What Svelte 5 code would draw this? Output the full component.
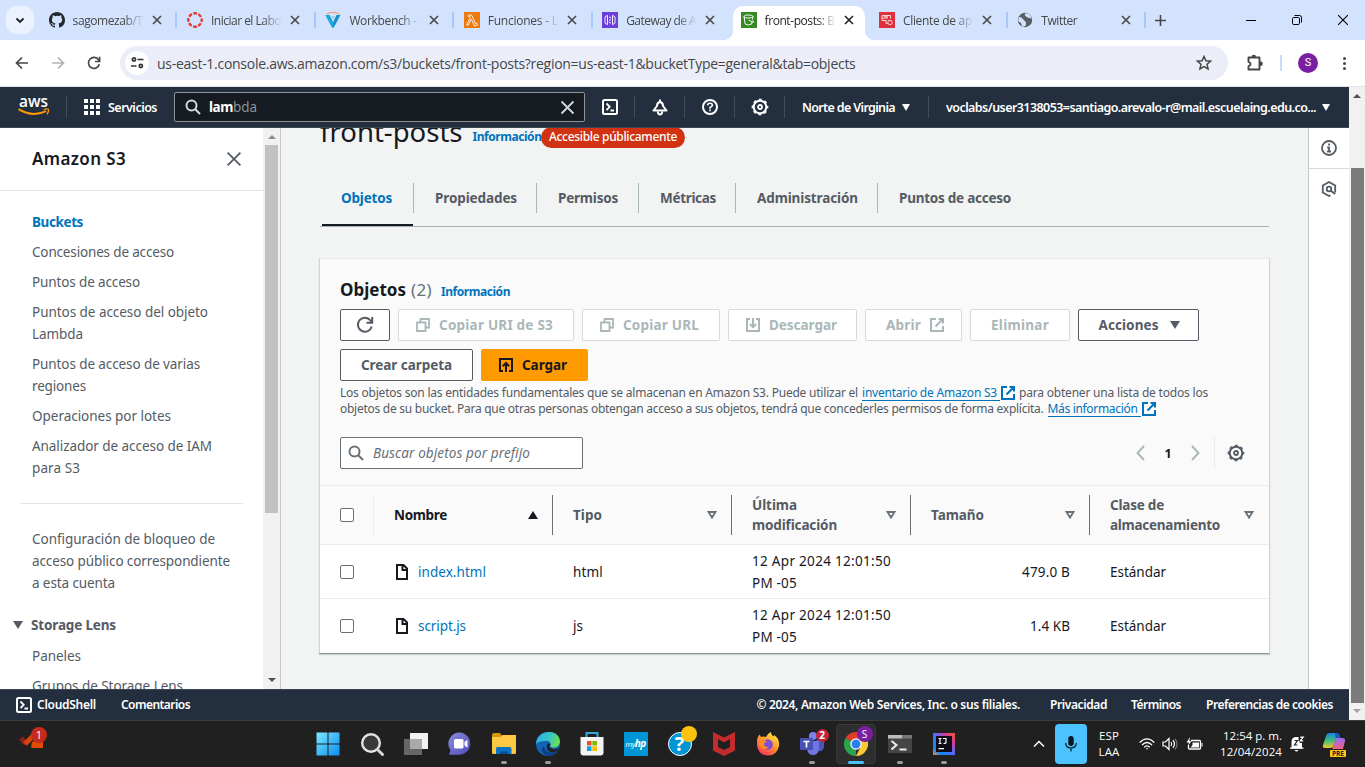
<script>
  // Spreads a label's letters so that it takes exactly the given width.
  function fit(node, width) {
    if (!width) return;
    const natural = node.getBoundingClientRect().width;
    node.style.letterSpacing = (width - natural) / node.textContent.length + 'px';
  }

  const tabs = [
    { icon: 'github', title: 'sagomezab/T', w: 70, sep: true },
    { icon: 'canvas', title: 'Iniciar el Labo', w: 70, sep: true },
    { icon: 'voc', title: 'Workbench - ', w: 70, sep: true },
    { icon: 'lambda', title: 'Funciones - L', w: 70, sep: true },
    { icon: 'gateway', title: 'Gateway de A', w: 70 },
    { icon: 's3', title: 'front-posts: B', w: 70, active: true },
    { icon: 'client', title: 'Cliente de ap', w: 69, sep: true },
    { icon: 'globe', title: 'Twitter', w: 36, sep: true }
  ];

  const links = [
    [['Concesiones de acceso', 142]],
    [['Puntos de acceso', 108]],
    [['Puntos de acceso del objeto', 176], ['Lambda', 51]],
    [['Puntos de acceso de varias', 168], ['regiones', 54]],
    [['Operaciones por lotes', 139]],
    [['Analizador de acceso de IAM', 180], ['para S3', 48]]
  ];

  const pageTabs = [
    { label: 'Objetos', w: 51, box: 94, on: true },
    { label: 'Propiedades', w: 82, box: 123 },
    { label: 'Permisos', w: 60, box: 102 },
    { label: 'Métricas', w: 56, box: 97 },
    { label: 'Administración', w: 101, box: 142 },
    { label: 'Puntos de acceso', w: 112, box: 153 }
  ];

  const columns = [
    { lines: [['Nombre', 53]], sorted: true },
    { lines: [['Tipo', 29]] },
    { lines: [['Última', 45], ['modificación', 85]] },
    { lines: [['Tamaño', 53]] },
    { lines: [['Clase de', 54], ['almacenamiento', 110]] }
  ];

  const rows = [
    { name: 'index.html', nw: 68, type: 'html', tw: 30, size: '479.0 B', sw: 48 },
    { name: 'script.js', nw: 48, type: 'js', tw: 10, size: '1.4 KB', sw: 40 }
  ];
</script>

{#snippet t(text, w, cls = '')}<span class="fit {cls}" use:fit={w}>{text}</span>{/snippet}

{#snippet favicon(kind)}
  {#if kind === 'github'}
    <svg width="16" height="16" viewBox="0 0 16 16"><path fill="#24292f" d="M8 0C3.58 0 0 3.58 0 8c0 3.54 2.29 6.53 5.47 7.59.4.07.55-.17.55-.38 0-.19-.01-.82-.01-1.49-2.01.37-2.53-.49-2.69-.94-.09-.23-.48-.94-.82-1.13-.28-.15-.68-.52-.01-.53.63-.01 1.08.58 1.23.82.72 1.21 1.87.87 2.33.66.07-.52.28-.87.51-1.07-1.78-.2-3.64-.89-3.64-3.95 0-.87.31-1.59.82-2.15-.08-.2-.36-1.02.08-2.12 0 0 .67-.21 2.2.82a7.6 7.6 0 0 1 4 0c1.53-1.04 2.2-.82 2.2-.82.44 1.1.16 1.92.08 2.12.51.56.82 1.27.82 2.15 0 3.07-1.87 3.75-3.65 3.95.29.25.54.73.54 1.48 0 1.07-.01 1.93-.01 2.2 0 .21.15.46.55.38A8.01 8.01 0 0 0 16 8c0-4.42-3.58-8-8-8Z"/></svg>
  {:else if kind === 'canvas'}
    <svg width="16" height="16" viewBox="0 0 16 16"><circle cx="8" cy="8" r="6.700" fill="none" stroke="#e8382b" stroke-width="2.400" stroke-dasharray="3.700 1.562" stroke-dashoffset="1.850"/></svg>
  {:else if kind === 'voc'}
    <svg width="16" height="16" viewBox="0 0 16 16"><path d="M.5 3h4L8 10.500 11.500 3h4L8.800 15.500H7.200z" fill="#1790c9"/><path d="M.5 3h4L8 10.500v5h-.8z" fill="#19a9dc"/><path d="M1.500 2Q8-1 14.500 2" stroke="#f29a76" fill="none" stroke-width="1.200"/><path d="M6 4h4L8 8z" fill="#9fd7ee"/></svg>
  {:else if kind === 'lambda'}
    <svg width="16" height="16" viewBox="0 0 16 16"><rect width="16" height="16" fill="#ee7a0c"/><path d="M4.500 3h3l4 8.500 1.200-.5.8 1.800-3 1.200L7.300 7l-3 6H2.500L6.200 5.800 5.700 4.600H4.500z" fill="none" stroke="#fff" stroke-width=".9"/></svg>
  {:else if kind === 'gateway'}
    <svg width="16" height="16" viewBox="0 0 16 16"><rect width="16" height="16" fill="#6b3ddb"/><path d="M3 5 5.500 3.300v9.400L3 11zM13 5l-2.500-1.700v9.400L13 11zM7 5.300h2M7 10.700h2M7.200 9.500 8.800 6.500" fill="none" stroke="#fff" stroke-width=".9"/></svg>
  {:else if kind === 's3'}
    <svg width="16" height="16" viewBox="0 0 16 16"><rect width="16" height="16" fill="#368a22"/><path d="M3 4.500 4.200 12q3 2 6.400 0l.5-2M11.500 7.500 12 4.500M3 4.500c0-2 9-2 9 0s-9 2-9 0zM7.500 8l4.500 2.300q2-.3-.5-2" fill="none" stroke="#fff"/></svg>
  {:else if kind === 'client'}
    <svg width="16" height="16" viewBox="0 0 16 16"><rect width="16" height="16" fill="#e0303d"/><path d="M3 3.500h8.500v3M3 3.500v5h4.500M3 6h6M7 8.500v3h1.500M5 4.700h4" fill="none" stroke="#fff" stroke-width=".8"/><circle cx="11" cy="10.500" r="2.200" fill="none" stroke="#fff" stroke-width=".8"/></svg>
  {:else}
    <svg width="16" height="16" viewBox="0 0 16 16"><circle cx="8" cy="8" r="7.200" fill="#5a5d61"/><path d="M2 5Q5 5 6 7t2 2 1 4q-2 3-4 1l-1-3-3-2zM8 1.500Q7 3 9 4.500T13 6l1.500 1Q14 2.500 9.500 1.300z" fill="#d3e3fd"/></svg>
  {/if}
{/snippet}

{#snippet cross(size, color, width)}
  <svg width={size} height={size} viewBox="0 0 10 10"><path d="M1 1l8 8M9 1 1 9" stroke={color} stroke-width={width} fill="none"/></svg>
{/snippet}

{#snippet gear(color)}
  <svg width="18" height="18" viewBox="0 0 18 18" fill="none" stroke={color}><circle cx="9" cy="9" r="6.300" stroke-width="2"/><circle cx="9" cy="9" r="7.700" stroke-width="1.300" stroke-dasharray="3 3.048" stroke-dashoffset="1.500"/><circle cx="9" cy="9" r="2" stroke-width="1.800"/></svg>
{/snippet}

{#snippet shell()}
  <svg width="16" height="16" viewBox="0 0 16 16" fill="none" stroke="#fff" stroke-width="2"><rect x="1" y="1" width="14" height="14" rx="1.500"/><path d="m4.500 4.500 3.200 3.300-3.200 3.300M8.500 11.500H12" stroke-width="1.800"/></svg>
{/snippet}

{#snippet external(color)}
  <svg class="ext" width="14" height="14" viewBox="0 0 14 14" fill="none" stroke={color} stroke-width="2"><path d="M6 1H1v12h12V8M8.500 1H13v4.500M13 1 5.500 8.500"/></svg>
{/snippet}

{#snippet copy()}
  <svg width="14" height="14" viewBox="0 0 14 14" fill="none" stroke="#aab7b8" stroke-width="1.800"><path d="M1 4.500h8.500V13H1zM4.500 4.500V1H13v8.500H9.500"/></svg>
{/snippet}

{#snippet searchIcon(color)}
  <svg width="16" height="16" viewBox="0 0 16 16" fill="none" stroke={color} stroke-width="2"><circle cx="6.500" cy="6.500" r="5"/><path d="m10 10 5 5"/></svg>
{/snippet}

<div class="screen">
  <div class="tabstrip">
    <div class="tabmenu"><svg width="10" height="7" viewBox="0 0 10 7"><path d="m1.500 1.500 3.500 3.500 3.500-3.500" fill="none" stroke="#1f1f1f" stroke-width="1.800"/></svg></div>
    <div class="tabs">
      {#each tabs as tab}
        <div class="tab" class:active={tab.active} class:sep={tab.sep}>
          <span class="fav">{@render favicon(tab.icon)}</span>
          <span class="title">{@render t(tab.title, tab.w)}</span>
          <span class="close">{@render cross(10, tab.active ? '#1f1f1f' : '#474747', 1.6)}</span>
        </div>
      {/each}
    </div>
    <div class="plus"><svg width="11" height="11" viewBox="0 0 11 11"><path d="M5.500 0v11M0 5.500h11" stroke="#474747" stroke-width="1.600"/></svg></div>
    <div class="winctl">
      <svg width="10" height="10" viewBox="0 0 10 10"><path d="M0 5.500h10" stroke="#000"/></svg>
      <svg width="10" height="10" viewBox="0 0 10 10" fill="none" stroke="#000"><rect x=".5" y="2.500" width="7" height="7" rx="1.200"/><path d="M2.500.500h5q2 0 2 2v5"/></svg>
      <svg width="10" height="10" viewBox="0 0 10 10"><path d="m0 0 10 10M10 0 0 10" stroke="#000" stroke-width="1.100"/></svg>
    </div>
  </div>

  <div class="toolbar">
    <div class="navbtns">
      <svg width="14" height="14" viewBox="0 0 14 14" fill="none" stroke="#474747" stroke-width="1.700"><path d="M13 7H1.800M7 1.500 1.500 7 7 12.500"/></svg>
      <svg width="14" height="14" viewBox="0 0 14 14" fill="none" stroke="#b0b2b5" stroke-width="1.700"><path d="M1 7h11.200M7 1.500 12.500 7 7 12.500"/></svg>
      <svg width="14" height="14" viewBox="0 0 14 14" fill="none" stroke="#474747" stroke-width="1.700"><path d="M12.300 8.300A5.500 5.500 0 1 1 11.500 3.800L12.500 5M12.600.8v4.700H8"/></svg>
    </div>
    <div class="omnibox">
      <span class="site"><svg width="13" height="12" viewBox="0 0 13 12" fill="none" stroke="#333" stroke-width="1.700"><circle cx="3" cy="2.500" r="1.600"/><path d="M6.500 2.500h6M0 9h5.500"/><circle cx="9.800" cy="9" r="1.600"/></svg></span>
      {@render t('us-east-1.console.aws.amazon.com/s3/buckets/front-posts?region=us-east-1&bucketType=general&tab=objects', 698.5, 'url')}
      <svg class="star" width="16" height="16" viewBox="0 0 16 16"><path d="m8 1.500 1.900 4.300 4.700.4-3.600 3.100 1.100 4.600L8 11.500l-4.100 2.400L5 9.300 1.400 6.200l4.700-.4z" fill="none" stroke="#474747" stroke-width="1.500"/></svg>
    </div>
    <svg class="puzzle" width="18" height="18" viewBox="0 0 18 18"><path d="M2.500 3.500h11v12h-11v-3.300q2-.5 2-2.200t-2-2.200z" fill="none" stroke="#474747" stroke-width="1.900" stroke-linejoin="round"/><path d="M5.500 3q0-2.300 2.300-2.300T10 3zM14 7.200q2.800 0 2.800 2.500T14 12z" fill="#474747"/></svg>
    <i class="tbsep"></i>
    <span class="avatar">S</span>
    <span class="dots"><i></i><i></i><i></i></span>
  </div>

  <div class="page">
    <div class="app">
      <header class="awsnav">
        <div class="logo"><svg width="32" height="21" viewBox="0 0 32 21"><text x="1" y="11" textLength="29" lengthAdjust="spacingAndGlyphs">aws</text><path d="M.5 13.200q14 8.500 27.500 2" fill="none" stroke="#f90" stroke-width="2"/><path d="M25.500 13.500q3.500-1 5-.2.500 2-1.600 5" fill="none" stroke="#f90" stroke-width="1.300"/></svg></div>
        <div class="services"><span class="nine">{#each Array(9) as _}<i></i>{/each}</span>{@render t('Servicios', 49)}</div>
        <div class="navsearch">
          {@render searchIcon('#d5dbdb')}
          <span class="query"><b>{@render t('lam', 24)}</b>{@render t('bda', 24)}</span>
          {@render cross(15, '#d5dbdb', 1.2)}
        </div>
        <div class="navicon">{@render shell()}</div>
        <div class="navicon"><svg width="16" height="17" viewBox="0 0 16 17" fill="none" stroke="#fff" stroke-width="2" stroke-linejoin="round"><path d="M8 .5V3M8 3Q5 3.500 5 7L1.500 11.500h13L11 7Q11 3.500 8 3z"/><path d="M5.800 12.500Q6 15.500 8 15.500t2.200-3"/></svg></div>
        <div class="navicon"><svg width="16" height="16" viewBox="0 0 16 16" fill="none" stroke="#fff" stroke-width="2"><circle cx="8" cy="8" r="7"/><path d="M5.600 6.500Q5.700 4.300 8 4.300t2.400 2Q10.400 7.500 8 8.500v1.200M8 10.600v1.700" stroke-width="1.600"/></svg></div>
        <div class="navicon">{@render gear('#fff')}</div>
        <div class="region">{@render t('Norte de Virginia', 93)}<i class="caret"></i></div>
        <div class="account">{@render t('voclabs/user3138053=santiago.arevalo-r@mail.escuelaing.edu.co...', 370)}<i class="caret"></i></div>
      </header>

      <div class="body">
        <aside>
          <div class="sidecontent">
            <div class="sidehead">{@render t('Amazon S3', 94)}{@render cross(16, '#545b64', 1.1)}</div>
            <nav>
              <div class="link current">{@render t('Buckets', 51)}</div>
              {#each links as link}
                <div class="link">{#each link as [text, w]}<div>{@render t(text, w)}</div>{/each}</div>
              {/each}
              <hr />
              <div class="link">
                <div>{@render t('Configuración de bloqueo de', 183)}</div>
                <div>{@render t('acceso público correspondiente', 198)}</div>
                <div>{@render t('a esta cuenta', 83)}</div>
              </div>
              <div class="group"><i class="caret"></i>{@render t('Storage Lens', 85)}</div>
              <div class="link">{@render t('Paneles', 49)}</div>
              <div class="link">{@render t('Grupos de Storage Lens', 151)}</div>
            </nav>
          </div>
          <div class="sidebar-scroll"><i class="up"></i><div class="thumb"></div><i class="down"></i></div>
        </aside>

        <main>
          <div class="heading">{@render t('front-posts', 142.500, 'h1')}{@render t('Información', 69, 'info')}<span class="badge">{@render t('Accesible públicamente', 128)}</span></div>
          <div class="pagetabs">
            {#each pageTabs as tab}
              <div class="ptab" class:on={tab.on} style:width="{tab.box}px">{@render t(tab.label, tab.w)}</div>
            {/each}
          </div>

          <section class="card">
            <div class="cardhead">
              <div class="cardtitle">{@render t('Objetos', 66, 'h2')}{@render t('(2)', 21, 'count')}{@render t('Información', 69, 'info')}</div>
              <div class="buttons">
                <button class="btn b1"><svg width="18" height="18" viewBox="0 0 18 18" fill="none" stroke="#545b64" stroke-width="2"><path d="M15.700 10.500A7 7 0 1 1 14.500 4.500L16 6.300M16.200 1v5.800h-5.700"/></svg></button>
                <button class="btn b2 off">{@render copy()}{@render t('Copiar URI de S3', 114)}</button>
                <button class="btn b3 off">{@render copy()}{@render t('Copiar URL', 76)}</button>
                <button class="btn b4 off"><svg width="14" height="14" viewBox="0 0 14 14" fill="none" stroke="#aab7b8" stroke-width="2"><path d="M4 1H1v12h12V1h-3M7 0v9M3.800 6 7 9.200 10.200 6"/></svg>{@render t('Descargar', 68)}</button>
                <button class="btn b5 off">{@render t('Abrir', 35)}{@render external('#aab7b8')}</button>
                <button class="btn b6 off">{@render t('Eliminar', 58)}</button>
                <button class="btn b7">{@render t('Acciones', 60)}<i class="caret"></i></button>
                <button class="btn b8">{@render t('Crear carpeta', 91)}</button>
                <button class="btn b9 primary"><svg width="14" height="14" viewBox="0 0 14 14" fill="none" stroke="#16191f" stroke-width="2"><path d="M4 13H1V1h12v12h-3M7 14V5M3.800 8.200 7 5l3.200 3.200"/></svg>{@render t('Cargar', 45)}</button>
              </div>
              <p>{@render t('Los objetos son las entidades fundamentales que se almacenan en Amazon S3. Puede utilizar el', 518)}<a href="#inventory">{@render t('inventario de Amazon S3', 135)}</a>{@render external('#0073bb')}<span class="after">{@render t('para obtener una lista de todos los', 189)}</span></p>
              <p>{@render t('objetos de su bucket. Para que otras personas obtengan acceso a sus objetos, tendrá que concederles permisos de forma explícita.', 703.500)}<a class="more" href="#more">{@render t('Más información', 90)}</a>{@render external('#0073bb')}</p>
              <div class="filter">
                <div class="search">{@render searchIcon('#687078')}{@render t('Buscar objetos por prefijo', 157)}</div>
                <div class="pager">
                  <svg width="9" height="16" viewBox="0 0 9 16"><path d="M8 1 1.500 8 8 15" fill="none" stroke="#aab7b8" stroke-width="1.900"/></svg>
                  <b>1</b>
                  <svg width="9" height="16" viewBox="0 0 9 16"><path d="m1 1 6.500 7L1 15" fill="none" stroke="#aab7b8" stroke-width="1.900"/></svg>
                  <span class="prefs">{@render gear('#545b64')}</span>
                </div>
              </div>
            </div>

            <div class="row head">
              <div class="sel"><i class="box"></i></div>
              {#each columns as c}
                <div class="col" class:sorted={c.sorted}>
                  <div>{#each c.lines as [text, w]}<div>{@render t(text, w)}</div>{/each}</div>
                  {#if c.sorted}
                    <svg width="10" height="8" viewBox="0 0 10 8"><path d="M5 0 10 8H0z" fill="#16191f"/></svg>
                  {:else}
                    <svg width="10" height="8" viewBox="0 0 10 8"><path d="M1.500 1h7L5 6.600z" fill="none" stroke="#687078" stroke-width="1.800"/></svg>
                  {/if}
                </div>
              {/each}
            </div>
            {#each rows as r}
              <div class="row data">
                <div class="sel"><i class="box"></i></div>
                <div class="cell name"><svg width="12" height="16" viewBox="0 0 12 16" fill="none" stroke="#16191f" stroke-width="2"><path d="M1 1h6.500L11 4.500V15H1zM6.500 1v5H11"/></svg>{@render t(r.name, r.nw)}</div>
                <div class="cell">{@render t(r.type, r.tw)}</div>
                <div class="cell"><div><div>{@render t('12 Apr 2024 12:01:50', 139)}</div><div>{@render t('PM -05', 45)}</div></div></div>
                <div class="cell num">{@render t(r.size, r.sw)}</div>
                <div class="cell">{@render t('Estándar', 56)}</div>
              </div>
            {/each}
          </section>
        </main>

        <div class="rail">
          <div><svg width="16" height="16" viewBox="0 0 16 16" fill="none" stroke="#545b64" stroke-width="1.800"><circle cx="8" cy="8" r="7"/><path d="M8 3.500v2M6.200 7.500H8v4M6 11.500h4"/></svg></div>
          <div><svg width="16" height="16" viewBox="0 0 16 16" fill="none" stroke="#545b64" stroke-width="1.800"><path d="M9.500 14.200 8 15l-6.200-3.500v-7L8 1l6.200 3.500v7"/><circle cx="8" cy="8" r="2.300"/><path d="m9.700 9.700 4.500 3.300"/></svg></div>
        </div>
      </div>

      <footer>
        <span class="f1">{@render shell()}</span>
        <span class="f2">{@render t('CloudShell', 59)}</span>
        <span class="f3">{@render t('Comentarios', 69)}</span>
        <span class="f4">{@render t('© 2024, Amazon Web Services, Inc. o sus filiales.', 263.500)}</span>
        <span class="f5">{@render t('Privacidad', 57)}</span>
        <span class="f6">{@render t('Términos', 50)}</span>
        <span class="f7">{@render t('Preferencias de cookies', 127)}</span>
      </footer>
    </div>
    <div class="pagescroll"><i class="up"></i><div class="thumb"></div><i class="down"></i></div>
  </div>

  <div class="taskbar">
    <div class="widget"><svg width="28" height="28" viewBox="0 0 28 28"><path d="m2 14 5 6" stroke="#8f2018" stroke-width="5"/><path d="m6 20 9-9" stroke="#d8430c" stroke-width="5"/><path d="M13 18 24 13v11H13l-1-1z" fill="#e04a08"/></svg><span class="count1">1</span></div>
    <div class="apps">
      <div><svg width="24" height="24" viewBox="0 0 24 24"><defs><linearGradient id="win" x1="0" y1="0" x2="1" y2="1"><stop offset="0" stop-color="#7ceaff"/><stop offset="1" stop-color="#0a8cf0"/></linearGradient></defs><path d="M.5.5h11v11H.5zM12.500.5h11v11h-11zM.5 12.500h11v11H.5zM12.500 12.500h11v11h-11z" fill="url(#win)"/></svg></div>
      <div><svg width="24" height="24" viewBox="0 0 24 24"><circle cx="11" cy="11" r="8.800" fill="#3a3a3c" stroke="#e4e4e6" stroke-width="2.400"/><path d="m17.500 17.500 5 5" stroke="#d5d5d8" stroke-width="3" stroke-linecap="round"/></svg></div>
      <div><svg width="24" height="24" viewBox="0 0 24 24"><path d="M6 1h18v16H6z" fill="#f1f1f1"/><path d="M0 7h18v16H0z" fill="#666"/><path d="M6 7h12v10H6z" fill="#aaa"/></svg></div>
      <div><svg width="24" height="24" viewBox="0 0 24 24"><defs><linearGradient id="chat" x1="0" y1="0" x2="1" y2="1"><stop offset="0" stop-color="#8a8ee0"/><stop offset="1" stop-color="#5149b8"/></linearGradient></defs><path d="M12.500.5a11.200 11.200 0 1 1-3 22.200H1l1.500-4.500A11.200 11.200 0 0 1 12.500.5z" fill="url(#chat)"/><rect x="6" y="7" width="9.500" height="9.500" rx="1.500" fill="#fff"/><path d="m16.500 10 3-2.200v8l-3-2.200z" fill="#fff"/></svg></div>
      <div><svg width="24" height="24" viewBox="0 0 24 24"><path d="M0 3q0-2 2-2h6l2 3h6v6H0z" fill="#d8960a"/><path d="M0 5h8.500l2-2H24v17.500q0 1.500-1.500 1.500h-21Q0 22 0 20.500z" fill="#fdc944"/><path d="M4 22v-5.500Q4 15 5.500 15h12q2 0 2 2v5z" fill="#0c72c4"/><path d="M8 19.500h8V22H8z" fill="#074f94"/></svg><u></u></div>
      <div><svg width="24" height="24" viewBox="0 0 24 24"><defs><linearGradient id="edge" x1="0" y1="0" x2="1" y2=".3"><stop offset="0" stop-color="#2aaee8"/><stop offset=".6" stop-color="#35c5c8"/><stop offset="1" stop-color="#66e05a"/></linearGradient></defs><circle cx="12" cy="12" r="12" fill="#1264b5"/><path d="M0 12C1-3.500 24-4 24 10q-1 6-8 5.500-3-1-1-3-1-5-7-3.500-5 0-8 3z" fill="url(#edge)"/><path d="M8 14q1 9 12 5.500l2-1q-4 7-12 5-7-5-2-9.500z" fill="#0b3f87"/><path d="M14.500 12.500q-3 2 2 4.500 4 1 7-2l-2 4q-7 3-10-1-2-4 1-7z" fill="#202124"/></svg><u></u></div>
      <div><svg width="24" height="24" viewBox="0 0 24 24"><path d="M6.500 6V1h11v5" fill="none" stroke="#35a9dd" stroke-width="2"/><path d="M.5 5h23v15.500q0 3-3 3h-17q-3 0-3-3z" fill="#f4f4f4"/><path d="M7 9h4.500v4.500H7z" fill="#f25022"/><path d="M12.300 9H17v4.500h-4.700z" fill="#7fba00"/><path d="M7 14.300h4.500V19H7z" fill="#00a4ef"/><path d="M12.300 14.300H17V19h-4.700z" fill="#ffb900"/></svg></div>
      <div><span class="myhp"><i>my</i><b>hp</b></span></div>
      <div class="help"><span>?</span><em></em></div>
      <div><svg width="24" height="24" viewBox="0 0 24 24"><path d="M1 0v18.500L12 24l11-5.500V0L12 5.500zM6 7l6 3.500L18 7v8l-6 3-6-3z" fill="#c42c2c" fill-rule="evenodd"/></svg></div>
      <div><svg width="24" height="24" viewBox="0 0 24 24"><defs><linearGradient id="fox" x1=".8" y1="0" x2=".2" y2="1"><stop offset="0" stop-color="#fff04a"/><stop offset=".45" stop-color="#ff9a2c"/><stop offset="1" stop-color="#ff2f58"/></linearGradient></defs><path d="M1 10Q1 5 3.500 2.500L5 5q3-1 5 0 2-4 5-5 0 3 3 4.500V3q6 4 5 11Q21 23.500 12 23.500T1 14z" fill="url(#fox)"/><circle cx="11.500" cy="12.500" r="5.300" fill="#7b4fd8"/><path d="M3 10q5-4 8 0-3 0-3 2 0 3 5 3.500-7 4-10-2z" fill="#ff8b25"/></svg></div>
      <div class="teams"><svg width="24" height="24" viewBox="0 0 24 24"><circle cx="13" cy="4" r="4" fill="#7b83eb"/><path d="M16 8h8v7q-1 5-6 4z" fill="#4f55b8"/><path d="M8 9h11v8q-1 6-6 6t-6-6z" fill="#6d76e3"/><rect y="6" width="13" height="12" rx="1" fill="#4950b5"/><path d="M3.500 9.500h6M6.500 9.500v6" stroke="#fff" stroke-width="1.700"/></svg><em class="n">2</em><u></u></div>
      <div class="chrome"><svg width="24" height="24" viewBox="0 0 24 24"><path d="M12 12 1.600 6A12 12 0 0 1 22.400 6z" fill="#e33b2e"/><path d="M12 12V24A12 12 0 0 1 1.600 6z" fill="#2ba24c"/><path d="M12 12 22.400 6A12 12 0 0 1 12 24l4-8z" fill="#fcc934"/><path d="M12 6h10.400Q16 2 12 6z" fill="#e33b2e"/><circle cx="12" cy="12" r="5.700" fill="#fff"/><circle cx="12" cy="12" r="4.500" fill="#2c7ef0"/></svg><em class="n s">S</em><u></u></div>
      <div><svg width="24" height="20" viewBox="0 0 24 20"><rect y="1" width="24" height="18" rx="1" fill="#454545"/><path d="M0 1h14v3.500H0z" fill="#bcbcbc"/><path d="M14 1h10v3.500H14z" fill="#777"/><path d="m3.500 7 5 4-5 4.500M11.500 15.500h7" fill="none" stroke="#eee" stroke-width="2"/></svg><u></u></div>
      <div><svg width="22" height="22" viewBox="0 0 22 22"><defs><linearGradient id="ij" x1="0" y1="1" x2="1" y2="0"><stop offset="0" stop-color="#fd8224"/><stop offset=".2" stop-color="#1189f7"/><stop offset=".5" stop-color="#4d6cff"/><stop offset=".75" stop-color="#d63a96"/><stop offset="1" stop-color="#fd5a24"/></linearGradient></defs><path d="M0 0h22v22H0z" fill="url(#ij)"/><path d="M3 3h16v16H3z" fill="#100b16"/><path d="M5.500 5.500h3M7 5.500v5M5.500 10.500h3M10 5.500h3v4q0 1-2.500 1M5.500 15.700h5.500" fill="none" stroke="#fff" stroke-width="1.200"/></svg><u></u></div>
    </div>
    <div class="tray">
      <svg class="chev" width="12" height="8" viewBox="0 0 12 8"><path d="M1 6.500 6 1.500l5 5" fill="none" stroke="#fff" stroke-width="1.500"/></svg>
      <span class="mic"><svg width="12" height="16" viewBox="0 0 12 16"><rect x="3.300" y="0" width="5.400" height="10" rx="2.700" fill="#0a1620"/><path d="M.7 7q0 5 5.300 5t5.300-5M6 12v3.500" fill="none" stroke="#0a1620" stroke-width="1.200"/></svg></span>
      <span class="lang"><span>{@render t('ESP', 20)}</span><span>{@render t('LAA', 21)}</span></span>
      <svg class="wifi" width="16" height="12" viewBox="0 0 16 12" fill="none" stroke="#fff" stroke-width="1.300"><path d="M.7 4.500Q8-2.800 15.300 4.500M3 7q5-5 10 0M5.200 9.300q2.800-2.800 5.600 0"/><circle cx="8" cy="10.800" r=".8" fill="#fff" stroke="none"/></svg>
      <svg class="vol" width="16" height="14" viewBox="0 0 16 14" fill="none" stroke="#fff" stroke-width="1.200"><path d="M1 5h2.500L7 1.500v11L3.500 9H1zM9 5q1.500 2 0 4M11 3.200q3 3.800 0 7.600"/><path d="M13 1.500q4 5.500 0 11" stroke="#777"/></svg>
      <svg class="bat" width="17" height="14" viewBox="0 0 17 14"><path d="M5 3.500h8.500q1 0 1 1v6.500q0 1-1 1h-10q-1 0-1-1V8" fill="none" stroke="#fff" stroke-width="1.300"/><path d="M6.500 5.500h6.500v5H4.500L6.500 8zM15.500 6h1v3.500h-1z" fill="#fff"/><path d="M4 0 .5 5.500H3L2 9l3.500-5H3.300z" fill="#fff"/></svg>
      <span class="clock"><span>{@render t('12:54 p. m.', 59)}</span><span>{@render t('12/04/2024', 62)}</span></span>
      <svg class="bell" width="15" height="16" viewBox="0 0 15 16"><path d="M1.500 11.500V6q0-5 5-5h2v3.500L10 7h2v5.500H1z" fill="#fff"/><path d="M0 11.500h13.500v1.300H0zM4.500 14h4q-2 3-4 0z" fill="#fff"/><path d="M4.500 4.500h3l-3 4.500h3" stroke="#222" fill="none" stroke-width="1.200"/><path d="M10.200 1.200h3l-3 3.600h3" stroke="#fff" fill="none" stroke-width="1.200"/></svg>
      <span class="copilot"><svg width="24" height="22" viewBox="0 0 24 22"><defs><linearGradient id="cp" x1="0" y1="0" x2="0" y2="1"><stop offset="0" stop-color="#1b7fe8"/><stop offset=".5" stop-color="#3cc07a"/><stop offset="1" stop-color="#f5c52c"/></linearGradient><linearGradient id="cq" x1="0" y1="0" x2="0" y2="1"><stop offset="0" stop-color="#9b6cf5"/><stop offset="1" stop-color="#f0607a"/></linearGradient></defs><path d="M7 1h7q2 0 1 2l-3 10q-1 3-4 3H3q-3 0-2-3L4 4q1-3 3-3z" fill="url(#cp)"/><path d="M13 1h2q2 0 2.500 2l1 3h-5z" fill="#1559c8"/><path d="M14 6h6q3.500 0 3 3l-2 8H10z" fill="url(#cq)"/></svg><b>PRE</b></span>
    </div>
  </div>
</div>

<style>
  :global(body) { margin: 0; overflow: hidden; }
  * { box-sizing: border-box; }
  svg { display: block; flex: none; }
  .fit { display: inline-block; white-space: pre; }
  .screen { width: 1365px; height: 767px; display: flex; flex-direction: column; overflow: hidden; font-family: "Noto Sans", "Open Sans", sans-serif; font-size: 13.5px; color: #16191f; background: #fff; }

  .tabstrip { height: 40px; flex: none; background: #d3e3fd; display: flex; align-items: stretch; padding-left: 6px; font-family: "Open Sans", sans-serif; font-size: 12px; color: #474747; }
  .tabmenu { width: 28px; height: 28px; margin-top: 6px; border-radius: 10px; background: #ebf2fe; display: flex; align-items: center; justify-content: center; }
  .tabs { display: flex; margin-left: 4px; }
  .tab { width: 138.4px; display: flex; align-items: center; padding-left: 10.600px; position: relative; }
  .tab.sep::after { content: ""; position: absolute; right: -1px; top: 12px; width: 2px; height: 16px; background: #a8c7fa; }
  .title { width: 71px; margin-left: 8px; overflow: hidden; white-space: nowrap; -webkit-mask-image: linear-gradient(90deg, #000 72%, transparent); mask-image: linear-gradient(90deg, #000 72%, transparent); }
  .close { margin-left: 8.200px; }
  .tab.active { color: #1f1f1f; }
  .tab.active::before { content: ""; position: absolute; left: 3px; right: 3px; top: 6px; bottom: 0; background: #fff; border-radius: 10px 10px 0 0; }
  .tab.active::after { content: ""; position: absolute; left: -7px; right: -7px; bottom: 0; height: 10px; background: radial-gradient(circle at 0 0, transparent 10px, #fff 10.500px) left / 10px 10px no-repeat, radial-gradient(circle at 100% 0, transparent 10px, #fff 10.500px) right / 10px 10px no-repeat; }
  .tab > span { position: relative; z-index: 1; }
  .plus { display: flex; align-items: center; margin-left: 10px; }
  .winctl { margin-left: auto; display: flex; align-items: center; gap: 36px; padding-right: 17px; }

  .toolbar { height: 47px; flex: none; display: flex; align-items: center; border-bottom: 1px solid #dfe1e5; background: #fff; }
  .navbtns { width: 120px; padding-left: 15px; display: flex; gap: 22px; }
  .omnibox { width: 1108px; height: 34px; border-radius: 17px; background: #ebeef8; display: flex; align-items: center; padding-left: 5px; font-family: "Open Sans", sans-serif; font-size: 14px; color: #44474b; }
  .site { width: 24px; height: 24px; border-radius: 50%; background: #fff; display: flex; align-items: center; justify-content: center; margin-right: 8px; }
  .omnibox .star { margin: 0 16px 0 auto; }
  .puzzle { margin-left: 18px; }
  .tbsep { width: 2px; height: 16px; background: #c9dcfb; margin-left: 16px; }
  .avatar { width: 20px; height: 20px; border-radius: 50%; background: #7b1fa2; color: #fff; font: 11px/20px Roboto, sans-serif; text-align: center; margin-left: 16px; }
  .dots { display: flex; flex-direction: column; gap: 2px; margin-left: 25px; }
  .dots i { width: 3px; height: 3px; border-radius: 50%; background: #474747; }

  .page { height: 633px; flex: none; display: flex; }
  .app { width: 1349px; display: flex; flex-direction: column; }
  .awsnav { height: 41px; flex: none; background: #232f3e; color: #fff; display: flex; align-items: center; border-bottom: 1px solid #3b4654; font-size: 12.500px; font-weight: 600; }
  .logo { width: 67px; height: 22px; padding-left: 18px; border-right: 1px solid #414d5c; }
  .logo svg { overflow: visible; }
  .logo text { font: 600 16.500px "Open Sans", sans-serif; fill: #fff; }
  .services { width: 107px; display: flex; align-items: center; padding-left: 17px; gap: 8px; }
  .nine { display: grid; grid-template-columns: repeat(3, 4px); gap: 2px; }
  .nine i { height: 4px; background: #fff; }
  .navsearch { width: 411px; height: 30px; background: #161a21; border: 1px solid #8d9396; border-radius: 2px; display: flex; align-items: center; padding: 0 9px 0 10px; }
  .query { margin: 0 auto 0 8px; font-size: 13.500px; font-weight: 400; color: #879596; }
  .query b { color: #fff; font-weight: 700; }
  .navicon { width: 50px; height: 22px; display: flex; align-items: center; justify-content: center; border-right: 1px solid #414d5c; }
  .caret { width: 0; height: 0; border: 4.500px solid transparent; border-top: 7px solid currentColor; border-bottom: 0; flex: none; }
  .region { width: 144px; height: 22px; padding-left: 17px; display: flex; align-items: center; gap: 7px; border-right: 1px solid #414d5c; }
  .account { padding-left: 17px; display: flex; align-items: center; gap: 6px; }

  .body { height: 561px; flex: none; display: flex; overflow: hidden; }
  aside { width: 281px; display: flex; border-right: 1px solid #c6c9c9; background: #fff; }
  .sidecontent { width: 263px; overflow: hidden; color: #545b64; }
  .sidehead { height: 63px; padding: 0 21px 0 32px; display: flex; align-items: center; justify-content: space-between; border-bottom: 1px solid #e3e6e6; font-size: 17px; font-weight: 600; color: #16191f; }
  .sidehead .fit { margin-top: -2px; }
  nav { padding-top: 16px; line-height: 22px; }
  .link { padding: 4px 0 4px 32px; }
  .current { color: #0073bb; font-weight: 700; }
  hr { width: 223px; margin: 20px 0 20px 20px; border: 0; border-top: 1px solid #e3e6e6; }
  .group { display: flex; align-items: center; gap: 8px; padding: 16px 0 5px 13px; font-weight: 700; }
  .group .caret { border-left-width: 5px; border-right-width: 5px; border-top-width: 8px; }
  .sidebar-scroll, .pagescroll { background: #f1f1f1; display: flex; flex-direction: column; align-items: center; width: 17px; }
  .up, .down { width: 0; height: 0; border: 4px solid transparent; }
  .up { border-top: 0; border-bottom: 4px solid #8b8b8b; }
  .down { border-bottom: 0; border-top: 4px solid #505050; margin-top: auto; }
  .sidebar-scroll .up { margin-top: 7px; }
  .sidebar-scroll .thumb { width: 13px; height: 368px; background: #c1c1c1; margin-top: 6px; }
  .sidebar-scroll .down { margin-bottom: 7px; }
  .pagescroll { width: 16px; }
  .pagescroll .up { margin-top: 7px; border-bottom-color: #505050; }
  .pagescroll .thumb { width: 13px; height: 535px; margin: 70px 0 0 1px; background: #7b7b7b; }
  .pagescroll .down { margin-bottom: 7px; border-top-color: #a3a3a3; }

  main { width: 1028px; background: #f2f3f3; border-right: 1px solid #c6c9c9; padding-left: 39px; overflow: hidden; }
  .heading { height: 55px; display: flex; align-items: flex-start; white-space: nowrap; }
  .fit:global(.h1) { font-size: 27.500px; line-height: 36px; margin-top: -14px; }
  .fit:global(.info) { font-size: 12px; line-height: 18px; font-weight: 700; color: #0073bb; margin-left: 10px; }
  .badge { height: 21px; border-radius: 11px; background: #d13212; color: #fff; padding: 0 8px; font-size: 12px; line-height: 18px; font-weight: 500; margin-top: -1px; padding-top: 1px; margin-left: -0.500px; }
  .pagetabs { height: 44px; border-bottom: 1px solid #a4b3b3; width: 949px; display: flex; color: #545b64; font-weight: 700; }
  .ptab { height: 30px; line-height: 30px; padding-left: 21px; border-right: 1px solid #aab7b8; position: relative; flex: none; }
  .ptab:last-child { border-right: 0; }
  .ptab.on { color: #0073bb; }
  .ptab.on::after { content: ""; position: absolute; left: 2px; right: 0; top: 41px; height: 2px; background: #16191f; }

  .card { width: 951px; height: 396px; margin: 31px 0 0 -1px; background: #fff; border: 1px solid #e6e9e9; border-left-color: #cfd4d4; border-right-color: #cfd4d4; border-bottom-color: #879596; box-shadow: 0 1px 1px #c9cecf; }
  .cardhead { height: 226px; background: #fafafa; padding: 19px 20px 0; color: #545b64; }
  .cardtitle { height: 24px; display: flex; align-items: baseline; }
  .fit:global(.h2) { font-size: 17px; font-weight: 700; line-height: 24px; color: #16191f; }
  .fit:global(.count) { font-size: 17px; margin-left: 5px; color: #687078; }
  .cardtitle .fit:global(.info) { margin-left: 9px; }
  .buttons { display: flex; flex-wrap: wrap; gap: 8px; margin-top: 7px; }
  .btn { height: 32px; border: 1px solid #545b64; border-radius: 2px; background: #fff; color: #545b64; font: 700 13.500px "Noto Sans", sans-serif; display: flex; align-items: center; justify-content: center; gap: 9px; padding: 0; }
  .off { border-color: #d5dbdb; color: #aab7b8; }
  .primary { background: #f90; border-color: #f90; color: #16191f; }
  .b1 { width: 50px; }
  .b2 { width: 176px; padding-right: 3px; }
  .b3 { width: 138px; padding-right: 3px; }
  .b4 { width: 129px; padding-right: 2px; }
  .b5 { width: 97px; padding-left: 3px; }
  .b6 { width: 100px; }
  .b7 { width: 121px; margin-right: 40px; padding-left: 1px; }
  .b8 { width: 133px; }
  .b9 { width: 107px; padding-right: 3px; }
  .b7 .caret { border-width: 8px 5.500px 0; margin-left: 2px; }
  p { margin: 0; height: 16px; line-height: 16px; font-size: 12px; display: flex; align-items: center; white-space: nowrap; }
  .buttons + p { margin-top: 4px; }
  p a { color: #0073bb; text-decoration: none; border-bottom: 1px solid #0073bb; height: 16px; margin-left: 4px; padding-right: 3px; }
  p .ext { margin-left: 1px; }
  .after { margin-left: 4px; }
  .filter { display: flex; justify-content: space-between; align-items: center; margin-top: 20px; }
  .search { width: 243px; height: 32px; border: 1px solid #687078; border-radius: 2px; background: #fff; display: flex; align-items: center; gap: 9px; padding-left: 7px; font-style: italic; color: #687078; }
  .pager { display: flex; align-items: center; color: #16191f; margin-right: 4px; }
  .pager b { width: 46px; text-align: center; font-size: 12.500px; }
  .prefs { height: 32px; margin-left: 14px; padding-left: 12px; border-left: 1px solid #eaeded; display: flex; align-items: center; }
  .row { display: grid; grid-template-columns: 53px 180px repeat(4, 179px); border-top: 1px solid #eaeded; }
  .head { height: 60px; background: #fafafa; color: #545b64; font-weight: 700; line-height: 20px; border-bottom: 1px solid #eaeded; align-items: center; }
  .data { height: 54px; line-height: 22px; align-items: center; }
  .head + .data { border-top: 0; height: 53px; padding-top: 1px; }
  .sel { padding-left: 20px; }
  .box { display: block; width: 14px; height: 14px; border: 1px solid #687078; border-radius: 2px; background: #fff; }
  .col { height: 40px; display: flex; align-items: center; justify-content: space-between; padding: 0 14px 0 20px; border-right: 1px solid #687078; }
  .col:last-child { border-right: 0; padding-right: 15px; }
  .sorted { color: #16191f; border-left: 1px solid #eaeded; padding-left: 20px; }
  .cell { padding-left: 20px; }
  .name { display: flex; align-items: center; gap: 10px; color: #0073bb; padding-left: 23px; }
  .num { text-align: right; padding-right: 20px; }
  .rail { width: 40px; background: #fff; }
  .rail div { height: 41px; display: flex; align-items: center; justify-content: center; border-bottom: 1px solid #d5dbdb; }
  .rail div + div { border: 0; height: 39px; }

  footer { height: 31px; flex: none; background: #232f3e; border-top: 1px solid #3b4654; color: #fff; font-size: 12px; font-weight: 600; display: flex; align-items: center; padding: 0 16px; }
  footer span { margin-bottom: 1px; }
  footer .f1 { margin-bottom: 0; }
  .f2 { margin-left: 5px; }
  .f3 { margin-left: 25px; }
  .f4 { margin-left: auto; }
  .f5 { margin-left: 30px; }
  .f6 { margin-left: 24px; }
  .f7 { margin-left: 25px; }

  .taskbar { height: 47px; flex: none; background: #202020; border-top: 1px solid #3c3c3c; display: flex; align-items: center; color: #fff; font-family: "Open Sans", sans-serif; }
  .widget { width: 305.500px; padding-left: 19px; height: 40px; position: relative; }
  .count1 { position: absolute; left: 31px; top: 3px; width: 16px; height: 16px; border-radius: 50%; background: #c42b1c; font-size: 11px; line-height: 16px; text-align: center; }
  .apps { display: flex; }
  .apps > div { width: 44px; height: 40px; display: flex; align-items: center; justify-content: center; position: relative; }
  u { position: absolute; left: 19px; bottom: 0; width: 6px; height: 3px; border-radius: 2px; background: #9a9a9a; }
  .myhp { width: 24px; height: 24px; background: #0096d6; font-size: 8px; line-height: 23px; text-align: center; letter-spacing: -0.500px; }
  .myhp b { font-size: 10px; font-style: italic; }
  .help span { width: 24px; height: 24px; border: 1.500px solid #fff; border-radius: 50%; background: #0096d6; font: 700 20px/22px "Open Sans", sans-serif; text-align: center; }
  .help em { position: absolute; left: 23px; top: 2px; width: 16px; height: 16px; border-radius: 50%; background: #ffc20e; }
  .n { position: absolute; right: 5px; top: 5px; width: 13px; height: 13px; border-radius: 50%; background: #c4243a; font: 700 10px/13px "Open Sans", sans-serif; text-align: center; }
  .n.s { background: #7b1fa2; font-weight: 400; right: 5px; top: 2px; width: 16px; height: 16px; line-height: 16px; }
  .chrome::before { content: ""; position: absolute; left: 2px; right: 2px; top: 0; bottom: 0; border-radius: 4px; background: #2e2e2e; border: 1px solid #383838; }
  .chrome svg { position: relative; }
  .chrome u { left: 14px; width: 16px; background: #4cc2ff; }
  .tray { display: flex; align-items: center; margin-left: auto; padding-right: 19px; }
  .mic { width: 32px; height: 40px; border-radius: 4px; background: #4cc2ff; display: flex; align-items: center; justify-content: center; margin-left: 10px; }
  .lang { display: flex; flex-direction: column; align-items: center; width: 44px; font-size: 11.500px; line-height: 16px; }
  .wifi { margin-left: 8px; }
  .vol { margin-left: 7px; }
  .bat { margin-left: 8px; }
  .clock { display: flex; flex-direction: column; align-items: flex-end; width: 79px; font-size: 11.500px; line-height: 16px; }
  .bell { margin-left: 8px; }
  .copilot { margin-left: 17px; position: relative; padding-bottom: 2px; }
  .copilot b { position: absolute; right: 0; bottom: -1px; background: #ffc914; color: #222; font-size: 6.500px; line-height: 7px; padding: 0 2px; border-radius: 1px; }
</style>
